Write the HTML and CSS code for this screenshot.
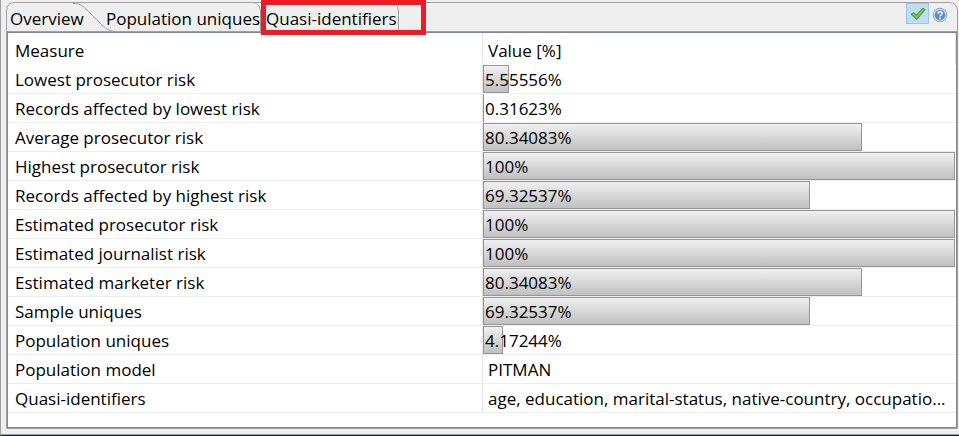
FILE: index.html
```html
<!DOCTYPE html>
<html lang="en">
<head>
<meta charset="utf-8">
<title>Risk overview</title>
<link rel="stylesheet" href="styles.css">
</head>
<body>
<main class="folder">
  <header class="strip">
    <nav class="tabs" role="tablist">
      <button class="tab tab-overview" role="tab" aria-selected="true">Overview</button>
      <svg class="curve" width="43" height="29" viewBox="0 0 43 29" aria-hidden="true"><path d="M0 .5C6 .5 9 2 13 6L28 21C33 26 37 28.500 43 28.500"/></svg>
      <button class="tab tab-population" role="tab" aria-selected="false">Population uniques</button>
      <button class="tab tab-quasi" role="tab" aria-selected="false">Quasi-identifiers</button>
    </nav>
    <div class="tools">
      <button class="tool tool-on" aria-label="Enabled" aria-pressed="true">
        <svg width="16" height="16" viewBox="0 0 16 16"><path d="M1 8.500 3.500 6.500 6.500 9 13 2 15.200 3.800 6.800 13.500Z" fill="#62b64d" stroke="#4c9c40" stroke-width="1"/><path d="M3 8.300 6.600 11 13.200 3.800" fill="none" stroke="#8fd077" stroke-width="1"/></svg>
      </button>
      <button class="tool tool-help" aria-label="Help">
        <svg width="16" height="16" viewBox="0 0 16 16"><circle cx="8" cy="8" r="6.700" fill="#e4edf8" stroke="#7b9cc8"/><circle cx="8" cy="8" r="5.300" fill="#5f8dc6"/><path d="M6 6.700C6 4.200 10 4.200 10 6.500 10 8 8 8 8 9.500M8 10.500V12" fill="none" stroke="#fff" stroke-width="1.500"/></svg>
      </button>
    </div>
  </header>
  <section class="content">
    <table class="measures">
      <thead><tr><th scope="col">Measure</th><th scope="col">Value [%]</th></tr></thead>
      <tbody>
        <tr><td>Lowest prosecutor risk</td><td class="value"><div class="bar" style="--value:5.55556%">5.55556%</div></td></tr>
        <tr><td>Records affected by lowest risk</td><td class="value"><div class="bar bar-thin" style="--value:0.31623%">0.31623%</div></td></tr>
        <tr><td>Average prosecutor risk</td><td class="value"><div class="bar" style="--value:80.34083%">80.34083%</div></td></tr>
        <tr><td>Highest prosecutor risk</td><td class="value"><div class="bar" style="--value:100%">100%</div></td></tr>
        <tr><td>Records affected by highest risk</td><td class="value"><div class="bar" style="--value:69.32537%">69.32537%</div></td></tr>
        <tr><td>Estimated prosecutor risk</td><td class="value"><div class="bar" style="--value:100%">100%</div></td></tr>
        <tr><td>Estimated journalist risk</td><td class="value"><div class="bar" style="--value:100%">100%</div></td></tr>
        <tr><td>Estimated marketer risk</td><td class="value"><div class="bar" style="--value:80.34083%">80.34083%</div></td></tr>
        <tr><td>Sample uniques</td><td class="value"><div class="bar" style="--value:69.32537%">69.32537%</div></td></tr>
        <tr><td>Population uniques</td><td class="value"><div class="bar" style="--value:4.17244%">4.17244%</div></td></tr>
        <tr><td>Population model</td><td>PITMAN</td></tr>
        <tr><td>Quasi-identifiers</td><td>age, education, marital-status, native-country, occupatio...</td></tr>
      </tbody>
    </table>
  </section>
</main>
</body>
</html>
```

FILE: styles.css
```css
*, *::before, *::after { box-sizing: border-box; }

body {
  margin: 0;
  min-height: 100vh;
  display: flex;
  padding: 2px 1px 6px 5px;
  background: #efefef;
  border-left: 1px solid #a0a0a0;
  border-bottom: 1px solid #20242c;
  box-shadow: inset 0 -1px #a0a0a0;
  color: #000;
  font: 17px/28px "Open Sans", "Noto Sans", sans-serif;
}

button {
  padding: 0;
  border: 0;
  background: none;
  color: inherit;
  font: inherit;
}

.folder {
  flex: 1;
  min-width: 0;
  display: flex;
  flex-direction: column;
  border: 1px solid #a0a0a0;
  border-radius: 8px 8px 0 0;
}

.strip {
  display: flex;
  justify-content: space-between;
  height: 29px;
  border-bottom: 1px solid #a0a0a0;
}

.tabs { display: flex; }

.tab {
  height: 28px;
  padding-top: 2px;
  white-space: nowrap;
  text-align: left;
}

.tab-overview {
  width: 66px;
  padding-left: 3px;
}

.curve {
  flex: none;
  fill: none;
  stroke: #a0a0a0;
}

.tab-population {
  width: 155px;
  margin-left: -10px;
  border-right: 1px solid #a0a0a0;
  border-top-right-radius: 8px;
}

.tab-quasi {
  position: relative;
  width: 138px;
  padding-left: 5px;
  border-right: 1px solid #a0a0a0;
  border-top-right-radius: 8px;
}

.tab-quasi::after {
  content: "";
  position: absolute;
  inset: -3px -28px -4px 0;
  border: 5px solid #ed1c24;
}

.tools {
  display: flex;
  padding-right: 6px;
}

.tool {
  display: grid;
  place-items: center;
  width: 23px;
  height: 21px;
}

.tool-on {
  background: #c2dcf2;
  border: 1px solid #90c8f6;
}

.tool-help {
  width: 22px;
  height: 23px;
}

.content {
  flex: 1;
  background: #fff;
  border: 1px solid #828790;
}

.measures {
  width: 100%;
  table-layout: fixed;
  border-collapse: separate;
  border-spacing: 0;
}

th, td {
  padding: 0 5px 0 7px;
  font-weight: 400;
  text-align: left;
  white-space: nowrap;
}

th {
  height: 32px;
  padding-top: 4px;
}

td {
  height: 29px;
  padding-top: 1px;
  line-height: 27px;
  border-bottom: 1px solid #efefef;
}

th + th, td + td {
  padding-left: 5px;
  border-left: 1px solid #e5e5e5;
}

th + th { border-right: 1px solid #e5e5e5; }

td.value { padding: 0 1px 0 0; }

.bar {
  position: relative;
  z-index: 0;
  height: 28px;
  padding: 1px 0 0 2px;
}

.bar::before {
  content: "";
  position: absolute;
  z-index: -1;
  top: 0;
  bottom: 0;
  left: 0;
  width: var(--value);
  border: 1px solid #969696;
  background: linear-gradient(#f0f0f0, #c0c0c0);
}

.bar-thin::before { border-right: 0; }
```
